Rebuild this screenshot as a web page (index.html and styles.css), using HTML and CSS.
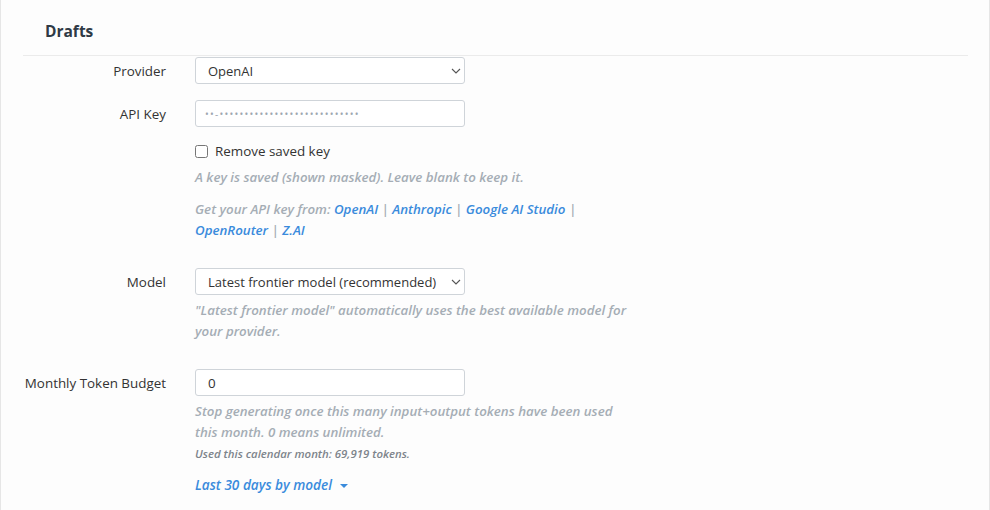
FILE: index.html
```html
<!DOCTYPE html>
<html lang="en">
<head>
  <meta charset="UTF-8">
  <meta name="viewport" content="width=device-width, initial-scale=1.0">
  <title>Drafts settings</title>
  <link rel="stylesheet" href="styles.css">
</head>
<body>
  <div class="panel">
    <div class="panel-heading">
      <h2 class="panel-title">Drafts</h2>
    </div>
    <form class="panel-body">
      <div class="form-row">
        <label class="form-label" for="provider">Provider</label>
        <div class="form-field">
          <div class="select-wrap">
            <select id="provider" class="form-control">
              <option>OpenAI</option>
              <option>Anthropic</option>
              <option>Google AI Studio</option>
              <option>OpenRouter</option>
              <option>Z.AI</option>
            </select>
            <svg class="select-arrow" width="10" height="6" viewBox="0 0 10 6"><path d="M1 1l4 4 4-4" fill="none" stroke="#555" stroke-width="1.1"/></svg>
          </div>
        </div>
      </div>

      <div class="form-row">
        <label class="form-label" for="apiKey">API Key</label>
        <div class="form-field">
          <input type="text" id="apiKey" class="form-control masked" value="••-••••••••••••••••••••••••••••">
          <label class="checkbox">
            <input type="checkbox"> Remove saved key
          </label>
          <p class="help">A key is saved (shown masked). Leave blank to keep it.</p>
          <p class="help help-links">Get your API key from: <a href="#">OpenAI</a> | <a href="#">Anthropic</a> | <a href="#">Google AI Studio</a> | <a href="#">OpenRouter</a> | <a href="#">Z.AI</a></p>
        </div>
      </div>

      <div class="form-row">
        <label class="form-label" for="model">Model</label>
        <div class="form-field">
          <div class="select-wrap">
            <select id="model" class="form-control">
              <option>Latest frontier model (recommended)</option>
            </select>
            <svg class="select-arrow" width="10" height="6" viewBox="0 0 10 6"><path d="M1 1l4 4 4-4" fill="none" stroke="#555" stroke-width="1.1"/></svg>
          </div>
          <p class="help">"Latest frontier model" automatically uses the best available model for your provider.</p>
        </div>
      </div>

      <div class="form-row">
        <label class="form-label" for="budget">Monthly Token Budget</label>
        <div class="form-field">
          <input type="text" id="budget" class="form-control" value="0">
          <p class="help">Stop generating once this many input+output tokens have been used this month. 0 means unlimited.</p>
          <p class="usage">Used this calendar month: 69,919 tokens.</p>
          <a href="#" class="toggle">Last 30 days by model <span class="caret"></span></a>
        </div>
      </div>
    </form>
  </div>
</body>
</html>
```

FILE: styles.css
```css
body {
  margin: 0;
  font-family: "Open Sans", Arial, sans-serif;
  font-size: 13.4px;
  color: #333;
  background: #fdfdfd;
}
.panel {
  height: 510px;
  border-left: 1px solid #e6e6e6;
  border-right: 1px solid #e6e6e6;
  padding: 0 21px 0 22px;
  box-sizing: border-box;
}
.panel-heading {
  height: 56px;
  border-bottom: 1px solid #ebebeb;
  display: flex;
  align-items: center;
  padding-left: 22px;
  padding-top: 6px;
  box-sizing: border-box;
}
.panel-title {
  margin: 0;
  font-size: 15.5px;
  font-weight: 700;
  color: #2f3a45;
}
.panel-body {
  padding-top: 1px;
}
.form-row {
  display: grid;
  grid-template-columns: 143px 1fr;
  column-gap: 29px;
  margin-bottom: 16px;
}
.form-row:nth-child(2),
.form-row:nth-child(3) {
  margin-bottom: 27px;
}
.form-label {
  text-align: right;
  padding-top: 1px;
  line-height: 26px;
  color: #333;
}
.form-field {
  width: 440px;
}
.form-control {
  display: block;
  width: 270px;
  height: 27px;
  box-sizing: border-box;
  border: 1px solid #cfd4d9;
  border-radius: 3px;
  background: #fff;
  padding: 0 12px;
  font-family: "Open Sans", Arial, sans-serif;
  font-size: 13.4px;
  color: #333;
  outline: none;
}
select.form-control {
  -webkit-appearance: none;
  appearance: none;
  font-size: 13px;
}
.select-wrap {
  position: relative;
  width: 270px;
}
.select-arrow {
  position: absolute;
  right: 4px;
  top: 11px;
  pointer-events: none;
}
.masked {
  font-size: 10px;
  letter-spacing: 1.25px;
  color: #9da6af;
  padding-left: 9px;
}
.checkbox {
  display: flex;
  align-items: center;
  gap: 7px;
  margin-top: 14px;
  line-height: 20px;
}
.checkbox input {
  margin: 0;
  width: 13px;
  height: 13px;
}
.help {
  margin: 0;
  font-style: italic;
  font-weight: 600;
  font-size: 13.3px;
  line-height: 21px;
  color: #a5adb5;
}
.checkbox + .help {
  margin-top: 6px;
}
.help-links {
  margin-top: 11px;
}
.help a {
  color: #3a8bdc;
  text-decoration: none;
}
.form-control + .help,
.select-wrap + .help {
  margin-top: 5px;
}
.usage {
  margin: 2px 0 0;
  font-style: italic;
  font-weight: 600;
  font-size: 11.4px;
  line-height: 17px;
  color: #7d848b;
}
.toggle {
  display: inline-block;
  margin-top: 13px;
  line-height: 20px;
  font-style: italic;
  font-weight: 600;
  font-size: 13.6px;
  color: #3a8bdc;
  text-decoration: none;
}
.caret {
  display: inline-block;
  width: 0;
  height: 0;
  margin-left: 4px;
  vertical-align: middle;
  border-left: 4px solid transparent;
  border-right: 4px solid transparent;
  border-top: 4px solid #3a8bdc;
}
```
